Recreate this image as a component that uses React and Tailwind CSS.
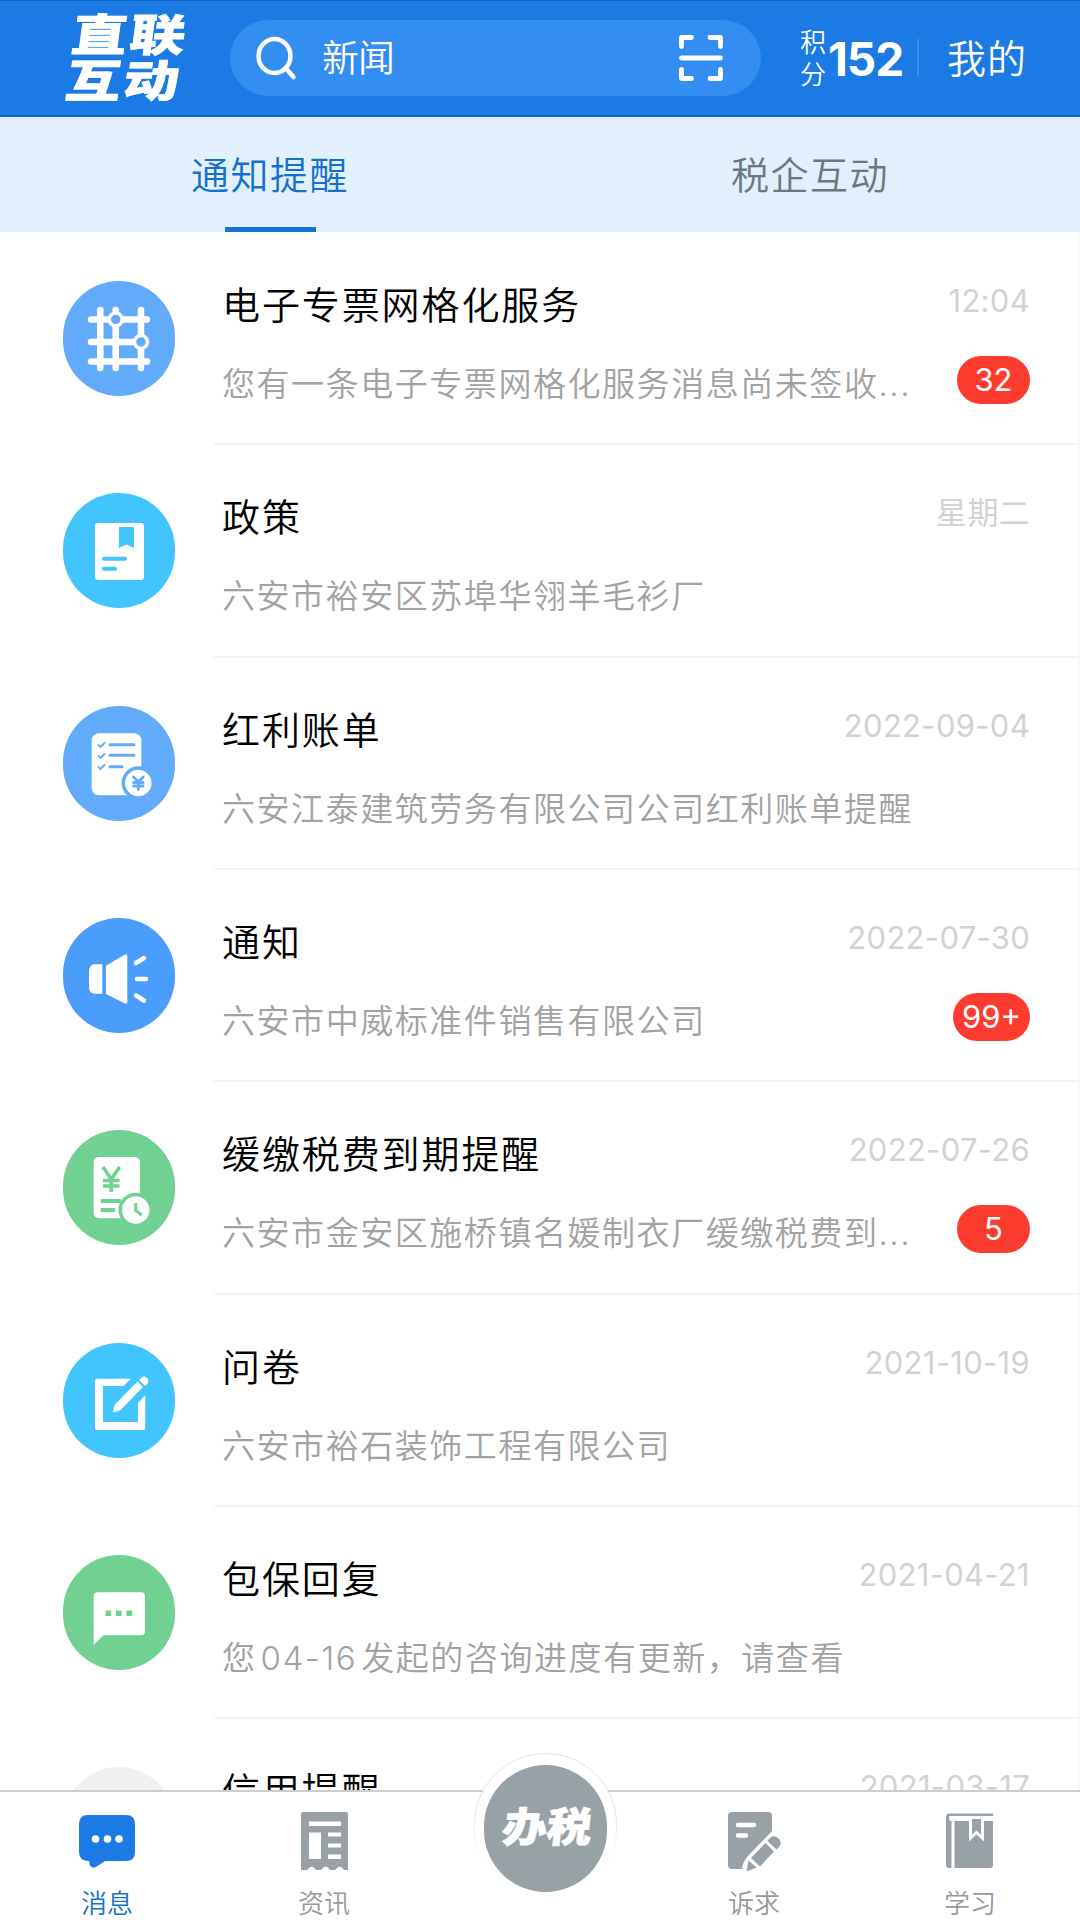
import React, { useState } from "react";

const GridIcon = () => (
  <svg viewBox="0 0 112 115" className="h-full w-full" fill="none" stroke="#fff" strokeWidth="6.500" strokeLinecap="round">
    <path d="M37.300 29v58M52.700 29v58M78 29v58M28 38.500h56M28 61h50M28 80.500h56" />
    <circle cx="52.700" cy="38.500" r="6.500" fill="#62abfb" strokeWidth="3.500" />
    <circle cx="78" cy="61" r="6.500" fill="#62abfb" strokeWidth="3.500" />
  </svg>
);

const BookIcon = () => (
  <svg viewBox="0 0 112 115" className="h-full w-full" fill="none">
    <rect x="32" y="30" width="49" height="57" rx="3" fill="#fff" />
    <path d="M56 34h15v21l-7.500-3.500L56 55z" fill="#42c4ff" />
    <path d="M41 65.700h21M41 75.700h11" stroke="#42c4ff" strokeWidth="4" strokeLinecap="round" />
  </svg>
);

const BillIcon = () => (
  <svg viewBox="0 0 112 115" className="h-full w-full" fill="none" strokeLinecap="round">
    <rect x="28.700" y="27.300" width="49.600" height="62" rx="7" fill="#fff" />
    <path d="M47 38.700h24M47 49.300h24M47 60.700h12" stroke="#62abfb" strokeWidth="3" />
    <path d="M35.500 39l2 2 4-4M35.500 50l2 2 4-4M35.500 61l2 2 4-4" stroke="#62abfb" strokeWidth="1.800" />
    <circle cx="75.300" cy="77" r="15" fill="#fff" stroke="#62abfb" strokeWidth="3.500" />
    <path d="M70.500 71l4.800 5 4.800-5M75.300 76v7.500M70.500 76.500h9.600M70.500 80h9.600" stroke="#62abfb" strokeWidth="2.800" />
  </svg>
);

const SpeakerIcon = () => (
  <svg viewBox="0 0 112 115" className="h-full w-full" fill="#fff">
    <path d="M39.300 46.300v29.400H31q-5-1-5-6V52q1-5 5-5.700z" />
    <path d="M43 47.700L62 36.600q2.300-.800 2.300 1.400v46q0 2.200-2.300 1.400L43 76z" />
    <path d="M73 45l8-5M74 61h9M73 77.500l8 5" stroke="#fff" strokeWidth="4.500" strokeLinecap="round" />
  </svg>
);

const TaxIcon = () => (
  <svg viewBox="0 0 112 115" className="h-full w-full" fill="none">
    <rect x="30.700" y="27" width="46.300" height="61.300" rx="5" fill="#fff" />
    <path d="M40 37l8.300 12L56.700 37M48.300 49v13M40 50.500h16.500M40 56h16.500" stroke="#70d192" strokeWidth="3.600" />
    <path d="M37.700 71h20M37.700 80h14.500" stroke="#70d192" strokeWidth="3.800" />
    <circle cx="72.700" cy="80" r="15.500" fill="#fff" stroke="#70d192" strokeWidth="3.500" />
    <path d="M72.700 73v7.500l6 4.500" stroke="#70d192" strokeWidth="3" />
  </svg>
);

const EditIcon = () => (
  <svg viewBox="0 0 112 115" className="h-full w-full" fill="#fff">
    <path d="M34 35.700h34l-7.500 7.300H40v36h35V60l7.300-8v33q0 2-2 2H34q-2 0-2-2V37.700q0-2 2-2z" />
    <path d="M50 69.500l1.500-7.500 23-23.500 5.500 5.500-23 23.500z" />
    <path d="M76 37l2.500-2.500q3-2 5.500.500t.500 5.500L82 43z" />
  </svg>
);

const ReplyIcon = () => (
  <svg viewBox="0 0 112 115" className="h-full w-full" fill="#fff">
    <path d="M34.700 37.300H78q4 0 4 4v35q0 4-4 4H40.300L30.700 90V41.300q0-4 4-4z" />
    <path d="M42.500 55.500h5.600v5.600h-5.600zM53 55.500h5.600v5.600H53zM63.500 55.500h5.600v5.600h-5.600z" fill="#70d192" />
  </svg>
);

const messages = [
  { title: "电子专票网格化服务", text: "您有一条电子专票网格化服务消息尚未签收...", date: "12:04", badge: "32", color: "bg-[#62abfb]", icon: GridIcon },
  { title: "政策", text: "六安市裕安区苏埠华翎羊毛衫厂", date: "星期二", color: "bg-[#42c4ff]", icon: BookIcon },
  { title: "红利账单", text: "六安江泰建筑劳务有限公司公司红利账单提醒", date: "2022-09-04", color: "bg-[#62abfb]", icon: BillIcon },
  { title: "通知", text: "六安市中威标准件销售有限公司", date: "2022-07-30", badge: "99+", color: "bg-[#4a9dfb]", icon: SpeakerIcon },
  { title: "缓缴税费到期提醒", text: "六安市金安区施桥镇名媛制衣厂缓缴税费到...", date: "2022-07-26", badge: "5", color: "bg-[#70d192]", icon: TaxIcon },
  { title: "问卷", text: "六安市裕石装饰工程有限公司", date: "2021-10-19", color: "bg-[#42c4ff]", icon: EditIcon },
  {
    title: "包保回复",
    text: (
      <>
        您<span className="mx-[4px]">04-16</span>发起的咨询进度有更新，请查看
      </>
    ),
    date: "2021-04-21",
    color: "bg-[#70d192]",
    icon: ReplyIcon,
  },
  { title: "信用提醒", text: "", date: "2021-03-17", color: "bg-[#f0f0f0]" },
];

const Header = () => (
  <header className="flex h-[117px] shrink-0 items-center border-t border-b-2 border-t-[#0768c6] border-b-[#0768c6] bg-[#1b7ae4] text-white">
    <div className="ml-[69px] w-[161px] shrink-0">
      <div className="w-[92px] origin-left -skew-x-[6deg] scale-x-[1.26] text-[44px] leading-[46px] font-black tracking-[2px] [-webkit-text-stroke:0.7px_white]">
        <div>直联</div>
        <div>互动</div>
      </div>
    </div>
    <div className="flex h-[76px] w-[531px] items-center rounded-full bg-[#348df0] pr-[36px] pl-[24px]">
      <svg viewBox="0 0 44 46" className="h-[46px] w-[44px]" fill="none" stroke="#fff" strokeWidth="4.500" strokeLinecap="round">
        <ellipse cx="20.500" cy="21" rx="16" ry="17" />
        <path d="M31.500 33l8 9" />
      </svg>
      <span className="mt-[2px] ml-[24px] text-[37px] tracking-[-1px]">新闻</span>
      <svg viewBox="0 0 48 50" className="ml-auto h-[50px] w-[48px]" fill="none" stroke="#fff" strokeWidth="4.800" strokeLinecap="round" strokeLinejoin="round">
        <path d="M4.500 13.500v-9h10M33 4.500h10.500v9M43.500 36.500v9H33M14.500 45.500h-10v-9M4.500 25h39" />
      </svg>
    </div>
    <div className="mt-[2px] ml-[39px] w-[26px] text-[26px] leading-[32px]">积分</div>
    <div className="mt-[2px] ml-[2px] w-[77px] text-[46px] font-bold tracking-[-1px]">152</div>
    <div className="ml-[12px] h-[38px] w-[2px] bg-[#3a8eec]" />
    <div className="mt-[2px] ml-[28px] text-[39px] tracking-[1px]">我的</div>
  </header>
);

const Tabs = ({ active, onChange }) => (
  <nav className="flex h-[115px] shrink-0 bg-[#e1f0fc]">
    {["通知提醒", "税企互动"].map((tab, i) => (
      <button
        key={tab}
        onClick={() => onChange(i)}
        className={`flex flex-1 flex-col items-center text-[38px] tracking-[1.5px] ${
          active === i ? "text-[#1471cc]" : "text-[#6e777f]"
        }`}
      >
        <span className="pt-[30px] leading-[56px]">{tab}</span>
        {active === i && <span className="mt-auto h-[5px] w-[91px] bg-[#1474d6]" />}
      </button>
    ))}
  </nav>
);

const MessageRow = ({ item }) => {
  const Icon = item.icon;
  return (
    <li className="flex h-[212.33px] shrink-0 pl-[63px]">
      <div className={`mt-[48px] h-[115px] w-[112px] shrink-0 rounded-full ${item.color}`}>{Icon && <Icon />}</div>
      <div className="ml-[39px] flex flex-1 flex-col border-b-2 border-[#f4f4f4] pr-[48px] pl-[8px]">
        <div className="flex h-[129px] justify-between pt-[47px]">
          <h2 className="text-[38px] leading-[50px] tracking-[1.9px] text-black">{item.title}</h2>
          <span className="text-[31px] leading-[42px] font-normal tracking-[0.3px] text-[#d2d2d2]">{item.date}</span>
        </div>
        <div className="flex items-start justify-between">
          <p className="text-[33px] leading-[44px] tracking-[1.55px] whitespace-nowrap text-[#a2a2a2]">{item.text}</p>
          {item.badge && (
            <span className="-mt-[6px] flex h-[48px] min-w-[73px] items-center justify-center rounded-full bg-[#fe3b2f] px-[9px] text-[31px] font-normal text-white">
              {item.badge}
            </span>
          )}
        </div>
      </div>
    </li>
  );
};

const NavItem = ({ label, active, className, children }) => (
  <div className={`flex flex-col items-center pt-[18px] ${className}`}>
    <svg viewBox="0 0 64 64" className="h-[64px] w-[64px]">
      {children}
    </svg>
    <span className={`mt-[14px] text-[26px] leading-[32px] ${active ? "text-[#1471cc]" : "text-[#999]"}`}>{label}</span>
  </div>
);

const BottomBar = () => (
  <footer className="relative flex h-[130px] shrink-0 border-t-2 border-[#cdcdcd] bg-white">
    <NavItem label="消息" active className="w-[214px]">
      <path d="M13 5h38q9 0 9 9v28q0 9-9 9H30l-9 6q-6 3-7-6-10 0-10-9V14q0-9 9-9z" fill="#1b7ae4" />
      <circle cx="20.500" cy="29" r="3.800" fill="#fff" />
      <circle cx="32.500" cy="29" r="3.800" fill="#fff" />
      <circle cx="44" cy="29" r="3.800" fill="#fff" />
    </NavItem>
    <NavItem label="资讯" className="w-[220px]">
      <path d="M11 2h43q2 0 2 2v56h-4q-4-7-9 0h-5q-4-7-9 0h-5q-4-7-9 0H9V4q0-2 2-2z" fill="#98a1a6" />
      <path d="M17 11.500h32v4.500H17zM17 22.500h12v26.500H17zM36 22.500h13v4H36zM36 33.500h13v4H36zM36 44.500h13v4.500H36z" fill="#fff" />
    </NavItem>
    <div className="w-[222px]" />
    <NavItem label="诉求" className="w-[196px]">
      <path d="M10 2h36q4 0 4 4v15L26 46q-5 5-6 13H10q-4 0-4-4V6q0-4 4-4z" fill="#98a1a6" />
      <path d="M16 15h16M16 25.500h8" stroke="#fff" strokeWidth="4.500" strokeLinecap="round" />
      <path d="M47 29q4-5 9-1t1 9l-2.500 2.500-9-8.500zM43.500 33l8.500 8.500-14 15-9-8.500zM26.500 50.500l8 7-10 4z" fill="#98a1a6" />
    </NavItem>
    <NavItem label="学习" className="flex-1 pl-[8px]">
      <path d="M10 3.500h45V6H12q-2 1 0 5h43v44q0 3-3 3H11q-3 0-3-3V7q0-3 2-3.500z" fill="#98a1a6" />
      <path d="M11 6.500h44v4H13zM13.500 10h3v48h-3z" fill="#fff" />
      <path d="M32.500 9v19l6-5.500 6 5.500V9" fill="#98a1a6" stroke="#fff" strokeWidth="3" />
    </NavItem>

    {/* raised button, its ring fades out towards the bottom */}
    <div className="absolute -top-[39px] left-[474px] h-[110px] w-[143px] overflow-hidden [mask-image:linear-gradient(black_50%,transparent)]">
      <div className="h-[147px] w-[143px] rounded-full border border-[#e2e2e2] bg-white" />
    </div>
    <button className="absolute -top-[27px] left-[484px] flex h-[127px] w-[123px] items-center justify-center rounded-full bg-[#98a1a6]">
      <span className="-skew-x-[6deg] scale-x-[1.09] pb-[2px] pl-[2px] text-[41px] font-black text-white [-webkit-text-stroke:0.7px_white]">
        办税
      </span>
    </button>
  </footer>
);

const App = () => {
  const [tab, setTab] = useState(0);

  return (
    <div className="flex h-[1920px] w-[1080px] flex-col overflow-hidden bg-white font-[Inter,'Noto_Sans_CJK_SC',sans-serif] font-[350]">
      <Header />
      <Tabs active={tab} onChange={setTab} />
      <ul className="flex min-h-0 flex-1 flex-col overflow-hidden border-r-2 border-[#f8f8f8] pt-px">
        {messages.map((item) => (
          <MessageRow key={item.title} item={item} />
        ))}
      </ul>
      <BottomBar />
    </div>
  );
};

export default App;
